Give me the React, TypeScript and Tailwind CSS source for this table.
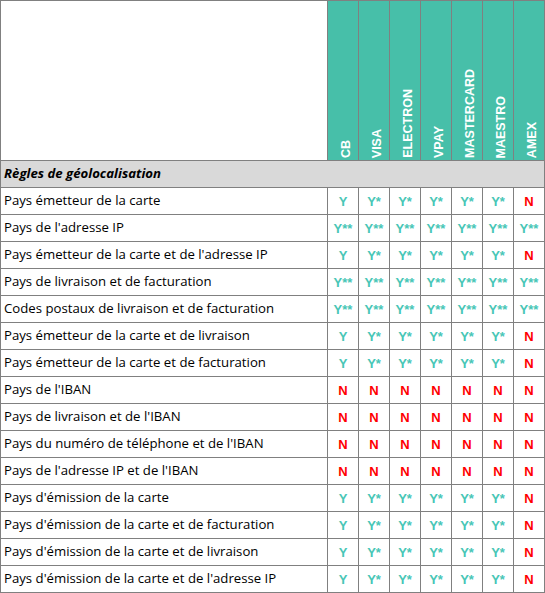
import React from 'react';

const cards = ['CB', 'VISA', 'ELECTRON', 'VPAY', 'MASTERCARD', 'MAESTRO', 'AMEX'];

// Y = oui, Y* / Y** = oui avec réserve, N = non
const A = ['Y', 'Y*', 'Y*', 'Y*', 'Y*', 'Y*', 'N'];
const B = ['Y**', 'Y**', 'Y**', 'Y**', 'Y**', 'Y**', 'Y**'];
const NN = ['N', 'N', 'N', 'N', 'N', 'N', 'N'];

const rules: { label: string; values: string[] }[] = [
  { label: "Pays émetteur de la carte", values: A },
  { label: "Pays de l'adresse IP", values: B },
  { label: "Pays émetteur de la carte et de l'adresse IP", values: A },
  { label: 'Pays de livraison et de facturation', values: B },
  { label: 'Codes postaux de livraison et de facturation', values: B },
  { label: 'Pays émetteur de la carte et de livraison', values: A },
  { label: 'Pays émetteur de la carte et de facturation', values: A },
  { label: "Pays de l'IBAN", values: NN },
  { label: "Pays de livraison et de l'IBAN", values: NN },
  { label: "Pays du numéro de téléphone et de l'IBAN", values: NN },
  { label: "Pays de l'adresse IP et de l'IBAN", values: NN },
  { label: "Pays d'émission de la carte", values: A },
  { label: "Pays d'émission de la carte et de facturation", values: A },
  { label: "Pays d'émission de la carte et de livraison", values: A },
  { label: "Pays d'émission de la carte et de l'adresse IP", values: A },
];

function Value({ v }: { v: string }) {
  const isNo = v === 'N';
  return (
    <div
      className={`bg-white flex items-center justify-center text-[13px] font-bold leading-none ${
        isNo ? 'text-[#ff0000]' : 'text-[#48c6b6]'
      }`}
      style={{ fontFamily: '"Liberation Sans", Arial, sans-serif' }}
    >
      {v}
    </div>
  );
}

export default function App() {
  return (
    <div
      className="w-[545px] bg-white text-black"
      style={{ fontFamily: '"Open Sans", "Noto Sans", sans-serif' }}
    >
      <div className="grid grid-cols-[326px_repeat(7,30px)] grid-rows-[159px] auto-rows-[26px] gap-px p-px bg-[#808080]">
        {/* Header */}
        <div className="bg-white" />
        {cards.map((card) => (
          <div key={card} className="bg-[#47bfa9] flex items-end justify-center pb-[2px]">
            <span
              className="[writing-mode:vertical-rl] rotate-180 text-white font-bold text-[12.5px] leading-[14px] translate-x-[3px]"
              style={{ fontFamily: '"Liberation Sans", Arial, sans-serif' }}
            >
              {card}
            </span>
          </div>
        ))}

        {/* Section */}
        <div className="col-span-8 bg-[#d9d9d9] flex items-center px-[3px] text-[13.2px] font-bold italic">
          Règles de géolocalisation
        </div>

        {/* Rows */}
        {rules.map((rule) => (
          <React.Fragment key={rule.label}>
            <div className="bg-white flex items-center px-[3px] text-[13.2px] whitespace-nowrap">
              {rule.label}
            </div>
            {rule.values.map((v, i) => (
              <Value key={i} v={v} />
            ))}
          </React.Fragment>
        ))}
      </div>
    </div>
  );
}
